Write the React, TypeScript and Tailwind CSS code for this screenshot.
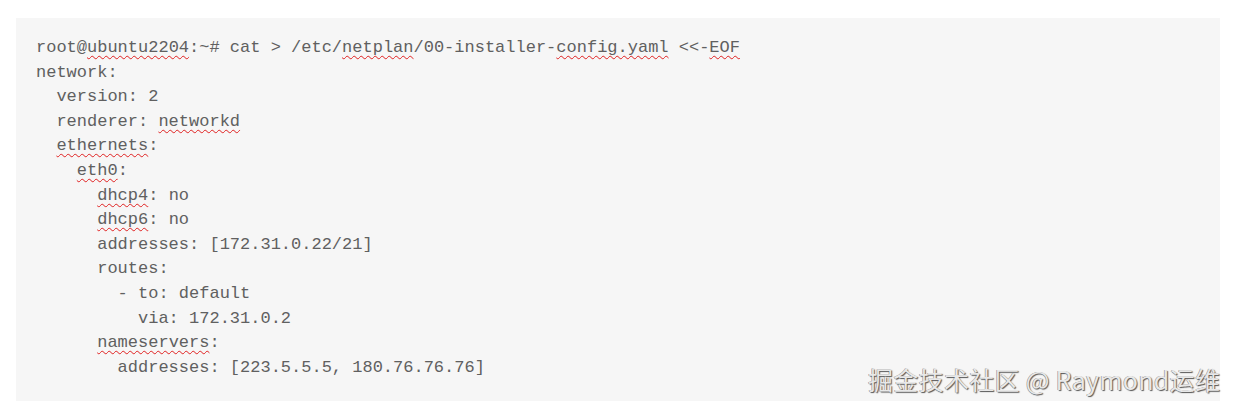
import React from "react";

const W = ({ children }: { children: React.ReactNode }) => (
  <span className="underline decoration-wavy decoration-[#e02020] decoration-1 underline-offset-[3px] [text-decoration-skip-ink:none]">{children}</span>
);

export default function App() {
  return (
    <div className="relative w-[1234px] h-[409px] bg-white pt-[18px] pl-[16px]">
      <div
        className="w-[1204px] h-[383px] bg-[#f6f6f6] pl-[20px] pt-[18px] text-[#606060] text-[17px] leading-[24.6px] whitespace-pre"
        style={{ fontFamily: "Consolas, 'Liberation Mono', monospace" }}
      >
        <div>root@<W>ubuntu2204</W>:~# cat &gt; /etc/<W>netplan</W>/00-installer-<W>config.yaml</W> &lt;&lt;-<W>EOF</W></div>
        <div>network:</div>
        <div>  version: 2</div>
        <div>  renderer: <W>networkd</W></div>
        <div>  <W>ethernets</W>:</div>
        <div>    <W>eth0</W>:</div>
        <div>      <W>dhcp4</W>: no</div>
        <div>      <W>dhcp6</W>: no</div>
        <div>      addresses: [172.31.0.22/21]</div>
        <div>      routes:</div>
        <div>        - to: default</div>
        <div>          via: 172.31.0.2</div>
        <div>      <W>nameservers</W>:</div>
        <div>        addresses: [223.5.5.5, 180.76.76.76]</div>
      </div>
      <div
        className="absolute left-[868px] top-[364px] text-[25px] tracking-[0.3px] leading-[30px] text-[#e8e8e8] whitespace-nowrap [text-shadow:1px_1px_1px_#555,-0.5px_-0.5px_0_#888]"
        style={{ fontFamily: "'Noto Sans CJK SC', 'Noto Sans', sans-serif" }}
      >
        掘金技术社区 @ Raymond运维
      </div>
    </div>
  );
}
